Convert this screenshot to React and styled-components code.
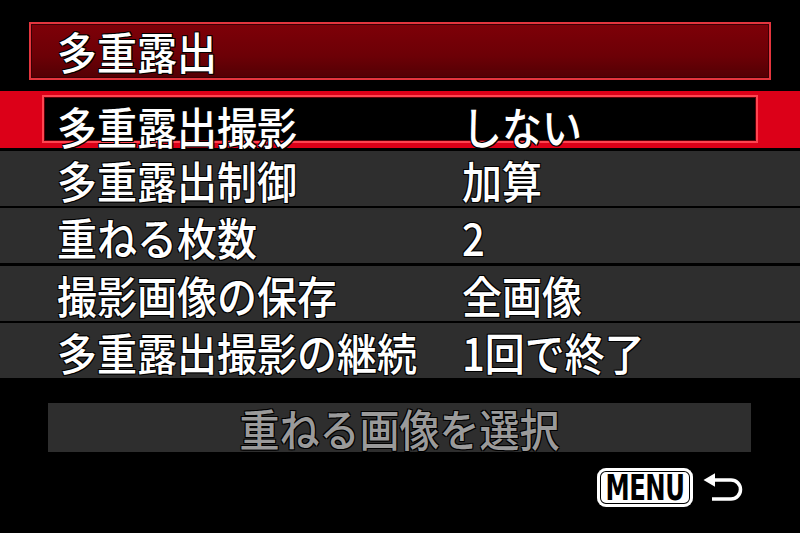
import React from 'react'
import styled, { createGlobalStyle } from 'styled-components'

const GlobalStyle = createGlobalStyle`
    html, body {
        margin: 0;
        padding: 0;
        background: #000;
    }
    body {
        font-family: "Noto Sans CJK JP", "Noto Sans", sans-serif;
    }
`

const items = [
    { label: '多重露出制御', value: '加算' },
    { label: '重ねる枚数', value: '2' },
    { label: '撮影画像の保存', value: '全画像' },
    { label: '多重露出撮影の継続', value: '1回で終了' },
]

function ReturnIcon() {
    return (
        <svg width="44" height="36" viewBox="0 0 44 36">
            <path d="M15 10 H31 A9.5 9.5 0 0 1 31 29 H12" fill="none" stroke="#000" strokeWidth="7" />
            <path d="M2 10 L16 1.5 V18.5 Z" fill="#000" stroke="#000" strokeWidth="3" strokeLinejoin="round" />
            <path d="M15 10 H31 A9.5 9.5 0 0 1 31 29 H12" fill="none" stroke="#fff" strokeWidth="3.5" />
            <path d="M3.5 10 L15 3.2 V16.8 Z" fill="#fff" />
        </svg>
    )
}

function App() {
    return (
        <Screen>
            <GlobalStyle />
            <TitleBar>
                <Tall>多重露出</Tall>
            </TitleBar>
            <List>
                <SelectedRow>
                    <SelectedBox>
                        <Label><Tall>多重露出撮影</Tall></Label>
                        <Tall>しない</Tall>
                    </SelectedBox>
                </SelectedRow>
                {items.map(item => (
                    <Row key={item.label}>
                        <Label><Tall>{item.label}</Tall></Label>
                        <Tall>{item.value}</Tall>
                    </Row>
                ))}
            </List>
            <ActionButton>
                <Tall>重ねる画像を選択</Tall>
            </ActionButton>
            <Footer>
                <MenuBadge>
                    <MenuText>MENU</MenuText>
                </MenuBadge>
                <ReturnIcon />
            </Footer>
        </Screen>
    )
}

export default App

const Screen = styled.div`
    width: 800px;
    height: 533px;
    background: #000;
    display: flex;
    flex-direction: column;
    padding-top: 22px;
    box-sizing: border-box;
    overflow: hidden;
    color: #fff;
    font-size: 40px;
    font-weight: 500;
    text-shadow: -1px -1px 0 #000, 1px -1px 0 #000, -1px 1px 0 #000, 1px 1px 0 #000;
`

const Tall = styled.span`
    display: inline-block;
    transform: scaleY(1.12);
    line-height: 1;
    white-space: nowrap;
`

const TitleBar = styled.div`
    margin: 0 29px;
    height: 58px;
    box-sizing: border-box;
    border: 2px solid #e4353e;
    box-shadow: inset 0 0 0 1px #3a0004;
    background: linear-gradient(#7e0008, #6c0006 60%, #520004);
    display: flex;
    align-items: center;
    padding-left: 26px;
`

const List = styled.div`
    margin-top: 11px;
    display: flex;
    flex-direction: column;
    gap: 2.5px;
`

const SelectedRow = styled.div`
    height: 57px;
    box-sizing: border-box;
    background: #dc0018;
    padding: 4px 42px 5px;
    display: flex;
`

const SelectedBox = styled.div`
    flex: 1;
    background: #000;
    border: 2px solid #ff4450;
    box-shadow: inset 0 0 0 1px #5a0008;
    display: grid;
    grid-template-columns: 405px 1fr;
    align-items: center;
    padding-left: 13px;
`

const Row = styled.div`
    height: 55px;
    background: #2e2e2e;
    display: grid;
    grid-template-columns: 405px 1fr;
    align-items: center;
    padding-left: 57px;
`

const Label = styled.div`
    white-space: nowrap;
`

const ActionButton = styled.div`
    margin: 25px 49px 0 48px;
    height: 49px;
    background: #2e2e2e;
    color: #9a9a9a;
    display: flex;
    align-items: center;
    justify-content: center;
`

const Footer = styled.div`
    margin-top: 16px;
    padding-right: 56px;
    display: flex;
    justify-content: flex-end;
    align-items: center;
    gap: 7px;
`

const MenuBadge = styled.div`
    width: 96px;
    height: 39px;
    box-sizing: border-box;
    background: #fff;
    border-radius: 9px;
    box-shadow: inset 0 0 0 3px #fff, inset 0 0 0 4px #000;
    display: flex;
    align-items: center;
    justify-content: center;
`

const MenuText = styled.span`
    display: inline-block;
    color: #000;
    text-shadow: none;
    font-family: "DejaVu Sans Condensed", "DejaVu Sans", sans-serif;
    font-weight: 700;
    font-size: 27px;
    line-height: 1;
    letter-spacing: -0.5px;
    transform: scaleY(1.3);
`
